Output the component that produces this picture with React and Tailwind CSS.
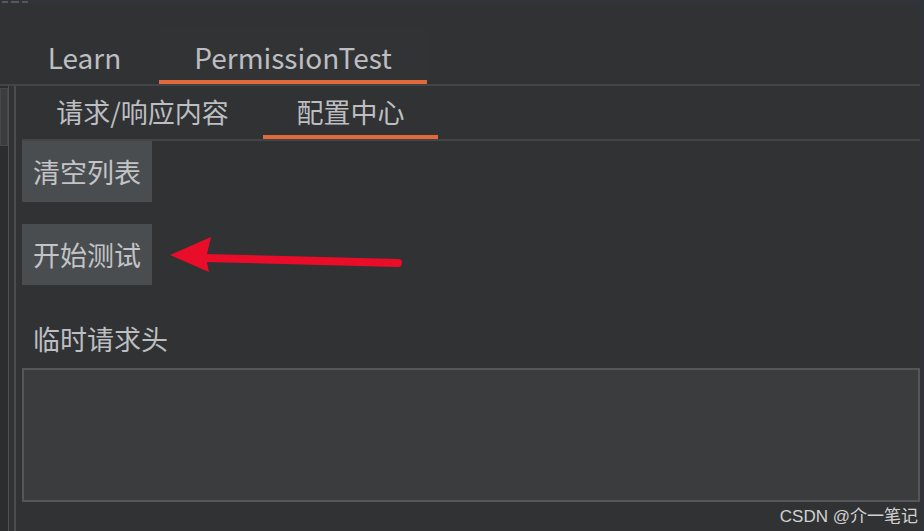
import React from "react";

const cjk = { fontFamily: '"Noto Sans CJK SC", "Noto Sans", sans-serif' };

const App = () => {
    const topTabs = [
        { name: "Learn", width: "w-[149px]", active: false },
        { name: "PermissionTest", width: "w-[268px]", active: true },
    ];

    const subTabs = [
        { name: "请求/响应内容", width: "w-[241px]", active: false },
        { name: "配置中心", width: "w-[175px]", active: true },
    ];

    return (
        <div
            className="relative w-[924px] h-[531px] overflow-hidden bg-[#313234] text-[#bcbec1] flex flex-col"
            style={cjk}
        >
            {/* window top edge */}
            <div className="h-[4px] bg-[#2e343a] flex items-center pl-[2px] gap-[3px]">
                <span className="w-[6px] h-[2px] bg-[#55585b]" />
                <span className="w-[8px] h-[2px] bg-[#55585b]" />
                <span className="w-[6px] h-[2px] bg-[#55585b]" />
            </div>

            <div className="flex flex-1">
                <div className="w-[920px] flex flex-col">
                    {/* top tabs */}
                    <div className="h-[82px] flex items-end pl-[10px] border-b-2 border-[#424446]">
                        {topTabs.map((t) => (
                            <div
                                key={t.name}
                                className={`${t.width} h-[54px] flex items-center justify-center pt-[3px] text-[28px] leading-none border-b-4 ${t.active ? "border-[#e2693a] bg-[#323335]" : "border-transparent"}`}
                            >
                                {t.name}
                            </div>
                        ))}
                    </div>

                    <div className="flex flex-1">
                        {/* left gutter */}
                        <div className="w-[22px] flex">
                            <div className="w-[8px] bg-[#2c2d2f] pt-[2px]">
                                <div className="h-[58px] bg-[#3b3d3f] border border-[#46484a]" />
                            </div>
                            <div className="w-[1px] bg-[#4e5052]" />
                            <div className="w-[5px]" />
                            <div className="w-[2px] bg-[#4a4c4e]" />
                        </div>

                        {/* panel */}
                        <div className="flex-1 flex flex-col">
                            <div className="h-[55px] flex items-end border-b-2 border-[#424446]">
                                {subTabs.map((t) => (
                                    <div
                                        key={t.name}
                                        className={`${t.width} h-[53px] flex items-center justify-center pt-[2px] text-[27px] leading-none border-b-4 ${t.active ? "border-[#e2693a]" : "border-transparent"}`}
                                    >
                                        {t.name}
                                    </div>
                                ))}
                            </div>

                            <div className="flex flex-col items-start">
                                <button className="w-[130px] h-[61px] bg-[#4a4d50] text-[27px] leading-none text-left pl-[11px] text-[#c2c4c6]">
                                    清空列表
                                </button>
                                <button className="mt-[22px] w-[130px] h-[61px] bg-[#4a4d50] text-[27px] leading-none text-left pl-[11px] text-[#c2c4c6]">
                                    开始测试
                                </button>
                            </div>

                            <div className="mt-[40px] pl-[11px] text-[27px] leading-none h-[29px]">临时请求头</div>

                            <div className="mt-[14px] h-[134px] bg-[#3b3c3e] border-2 border-[#545658]" />
                        </div>
                    </div>
                </div>
                <div className="w-[4px] bg-[#2e343a]" />
            </div>

            {/* annotation arrow */}
            <svg className="absolute left-0 top-0 pointer-events-none" width="924" height="531">
                <line x1="205" y1="258" x2="398" y2="263" stroke="#ea0d2a" strokeWidth="8" strokeLinecap="round" />
                <polygon points="170,255 211,237 206,258 209,272" fill="#ea0d2a" />
            </svg>

            {/* watermark */}
            <div
                className="absolute right-[6px] bottom-[6px] text-[17px] leading-none text-[#d2d2d2]"
                style={{ fontFamily: '"Liberation Sans", "Noto Sans CJK SC", sans-serif' }}
            >
                CSDN @介一笔记
            </div>
        </div>
    );
};

export default App;
